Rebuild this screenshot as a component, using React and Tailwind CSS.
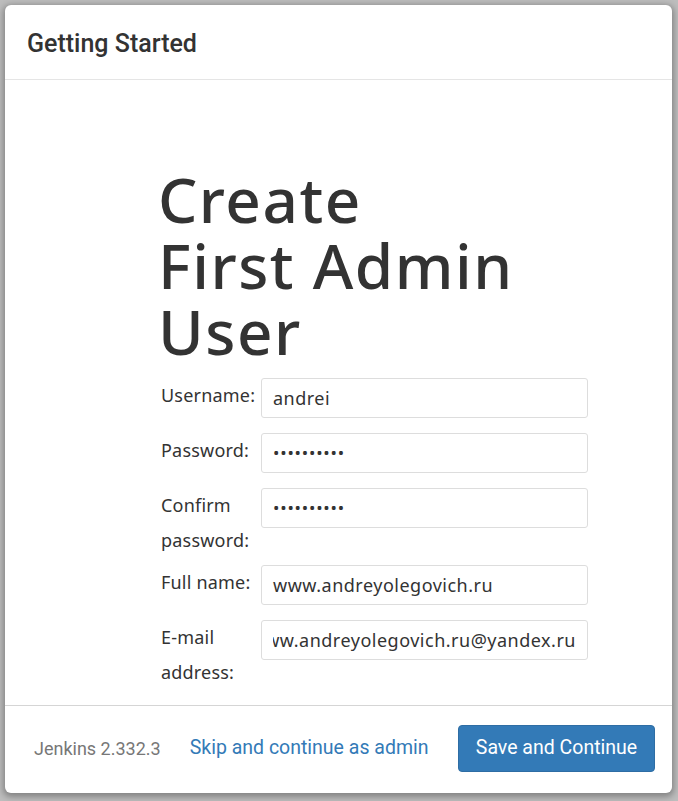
import React from "react";

const ubuntu = { fontFamily: '"Noto Sans", "Open Sans", sans-serif' };

function Row({ label, children, mb = "mb-[15px]" }) {
  return (
    <div className={`flex items-start ${mb}`}>
      <div className="w-[101px] shrink-0 text-[18px] tracking-[0.2px] leading-[35px] text-[#333] pl-[1px]">{label}</div>
      <div className="w-[327px] h-[40px] border border-[#ddd] rounded-[3px] bg-white flex items-center px-[11px] overflow-hidden text-[18px] tracking-[0.5px] text-[#333] whitespace-nowrap">
        {children}
      </div>
    </div>
  );
}

function Dots() {
  return <span className="text-[17px] tracking-[0.8px] text-[#333]">••••••••••</span>;
}

export default function App() {
  return (
    <div className="w-[678px] h-[801px] bg-[#bdbdbd] overflow-hidden">
      <div className="ml-[5px] mt-[5px] w-[667px] h-[788px] bg-white rounded-[6px] shadow-[0_2px_6px_2px_rgba(0,0,0,0.3)] flex flex-col overflow-hidden">
        <div className="h-[75px] shrink-0 border-b border-[#e5e5e5] flex items-center pl-[22px] pt-[3px]">
          <h4 className="text-[25px] font-medium text-[#333]" style={{ fontFamily: "Roboto, sans-serif" }}>
            Getting Started
          </h4>
        </div>
        <div className="flex-1 overflow-hidden" style={ubuntu}>
          <div className="ml-[155px] w-[428px] pt-[86px]">
            <h1 className="-ml-[2px] text-[62px] leading-[66px] font-medium text-[#333] mb-[14px] tracking-[1.5px]">
              Create<br />First Admin<br />User
            </h1>
            <Row label="Username:">andrei</Row>
            <Row label="Password:">
              <Dots />
            </Row>
            <Row label={<>Confirm<br />password:</>} mb="mb-[7px]">
              <Dots />
            </Row>
            <Row label="Full name:">www.andreyolegovich.ru</Row>
            <Row label={<>E-mail<br />address:</>}>
              <div className="w-full flex justify-end overflow-hidden">
                <span className="shrink-0">www.andreyolegovich.ru@yandex.ru</span>
              </div>
            </Row>
          </div>
        </div>
        <div className="h-[88px] shrink-0 border-t border-[#d5d5d5] flex items-center pl-[29px] pr-[17px] pb-[3px]" style={{ fontFamily: "Roboto, sans-serif" }}>
          <span className="text-[18px] text-[#777]">Jenkins 2.332.3</span>
          <span className="ml-[29px] text-[19.5px] text-[#337ab7]">Skip and continue as admin</span>
          <button className="ml-auto h-[47px] w-[197px] rounded-[4px] bg-[#337ab7] border border-[#2e6da4] text-white text-[19.5px]">
            Save and Continue
          </button>
        </div>
      </div>
    </div>
  );
}
